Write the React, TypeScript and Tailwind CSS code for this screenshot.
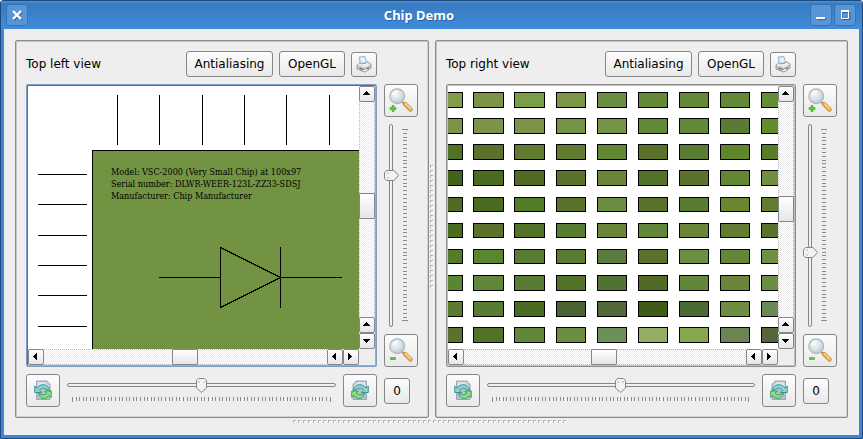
import { useState } from "react";
import type { ReactNode } from "react";

const buttonStyle =
  "flex shrink-0 items-center justify-center rounded-[3px] border border-[#868686] bg-linear-to-b from-[#fcfcfc] to-[#e9e9e9]";

function TitleButton({ label, children }: { label: string; children: ReactNode }) {
  return (
    <button
      type="button"
      aria-label={label}
      className="flex size-[22px] items-center justify-center rounded-[3px] border border-[#3473b5] bg-[#5795d7]"
    >
      <svg width="12" height="12" viewBox="0 0 12 12" aria-hidden="true">
        {children}
      </svg>
    </button>
  );
}

function PrinterIcon() {
  return (
    <svg width="16" height="17" viewBox="0 0 16 17" aria-hidden="true">
      <path d="M3 1l6-.5 1.500 6.500-6 1z" fill="#cfe6fb" stroke="#86a9cf" strokeWidth=".8" />
      <path d="M5 3l4-.4M5.500 5l4-.4" stroke="#fff" />
      <path d="M1 9l3-2.500 1 1.500 5-.8 1-1.700 4 2.500v4l-6 4-8-3z" fill="#c6c6c6" stroke="#8b8b8b" strokeWidth=".8" />
      <path d="M1.500 9l7.500 2.500 5.500-3.200-3.500-2-1 1.500-5 .7-1-1.500z" fill="#eee" />
      <path d="M3.500 12l5 2 4.500-2.600" fill="none" stroke="#666" strokeWidth="1.100" />
      <path d="M4 14l5 2 4-2.500-3-1-2 1.200z" fill="#f6f6f6" stroke="#8d8d8d" strokeWidth=".7" />
    </svg>
  );
}

function MagnifierIcon({ sign }: { sign: "plus" | "minus" }) {
  return (
    <svg width="24" height="25" viewBox="0 0 24 25" aria-hidden="true">
      <defs>
        <radialGradient id={`lens-${sign}`} cx=".4" cy=".35" r=".7">
          <stop offset="0" stopColor="#f4f9fb" />
          <stop offset=".6" stopColor="#d3dfe5" />
          <stop offset="1" stopColor="#b3c0c7" />
        </radialGradient>
      </defs>
      <path d="M12.500 13.500l3 2.500" stroke="#9b9b9b" strokeWidth="2" />
      <path d="M16 16l5.500 5.500" stroke="#b5803c" strokeWidth="4.200" strokeLinecap="round" />
      <path d="M16 16l5.500 5.500" stroke="#f0b04a" strokeWidth="3" strokeLinecap="round" />
      <path d="M16.300 15.300l5.200 5.200" stroke="#fde0a0" strokeWidth="1.200" strokeLinecap="round" />
      <circle cx="8.200" cy="8.200" r="7.400" fill={`url(#lens-${sign})`} stroke="#b0b7ba" strokeWidth="1.200" />
      <path d="M4 7a5 5 0 0 1 5-3.500" fill="none" stroke="#fff" strokeWidth="1.600" />
      {sign === "plus" ? (
        <path d="M3 17.500h2v2h2v2h-2v2h-2v-2h-2v-2h2z" fill="#56cf35" stroke="#3c9f2b" strokeWidth=".6" />
      ) : (
        <path d="M1.500 19.500h5v2h-5z" fill="#56cf35" stroke="#3c9f2b" strokeWidth=".6" />
      )}
    </svg>
  );
}

function RotateIcon({ mirrored }: { mirrored?: boolean }) {
  return (
    <svg width="18" height="21" viewBox="0 0 18 21" aria-hidden="true">
      <g transform={mirrored ? "translate(18 0) scale(-1 1)" : undefined}>
        <path d="M2.500 1h10.500l3 3v15.500H2.500z" fill="#b3becf" stroke="#8d9ab0" strokeWidth=".8" />
        <path d="M3.500 2h9l2.500 2.500V9H3.500z" fill="#dbe4ef" />
        <path d="M13 1v3h3z" fill="#f3f6fa" stroke="#8d9ab0" strokeWidth=".6" />
        <path d="M.7 6v6.500h7l-2.300-2.200c2-3 6.300-2.800 10.600 1.200C15.500 4.500 7.500 2.200 3 8z" fill="#83dcc6" stroke="#35889a" strokeWidth=".9" />
        <path d="M17.300 17.500V11h-6.500l2 2.200c-2 2.300-5 2-8.300-.2C6 19 11.500 20.500 15 15.500z" fill="#8be27c" stroke="#359a5c" strokeWidth=".9" />
      </g>
    </svg>
  );
}

type Direction = "up" | "down" | "left" | "right";

const arrows: Record<Direction, string> = {
  up: "M1 6h7v-1h-1v-1h-1v-1h-1v-1h-1v1h-1v1h-1v1h-1z",
  down: "M1 3h7v1h-1v1h-1v1h-1v1h-1v-1h-1v-1h-1v-1h-1z",
  left: "M6 1v7h-1v-1h-1v-1h-1v-1h-1v-1h1v-1h1v-1h1v-1z",
  right: "M2 1v7h1v-1h1v-1h1v-1h1v-1h-1v-1h-1v-1h-1v-1z",
};

function ScrollButton({ direction }: { direction: Direction }) {
  return (
    <button
      type="button"
      aria-label={`Scroll ${direction}`}
      className="flex size-4 shrink-0 items-center justify-center rounded-[2px] border border-[#868686] bg-linear-to-b from-white to-[#e6e6e6]"
    >
      <svg width="10" height="10" viewBox="0 0 10 10" shapeRendering="crispEdges" aria-hidden="true">
        <path d={arrows[direction]} fill="#000" />
      </svg>
    </button>
  );
}

const trackStyle =
  "relative flex-1 border-dotted border-[#b8b8b8] bg-[conic-gradient(#ebebeb_25%,#fff_0_50%,#ebebeb_0_75%,#fff_0)] bg-[length:2px_2px]";
const thumbStyle = "absolute rounded-[1px] border border-[#868686] bg-linear-to-b from-white to-[#e6e6e6]";

function ScrollBar({ vertical, position }: { vertical?: boolean; position: number }) {
  const place = `calc((100% - 26px) * ${position})`;
  return (
    <div className={vertical ? "flex w-4 flex-col" : "flex h-4"}>
      <ScrollButton direction={vertical ? "up" : "left"} />
      <div className={`${trackStyle} ${vertical ? "border-x" : "border-y"}`}>
        {vertical ? (
          <div className={`${thumbStyle} -inset-x-px h-[26px]`} style={{ top: place }} />
        ) : (
          <div className={`${thumbStyle} -inset-y-px w-[26px]`} style={{ left: place }} />
        )}
      </div>
      <ScrollButton direction={vertical ? "up" : "left"} />
      <ScrollButton direction={vertical ? "down" : "right"} />
    </div>
  );
}

function Ticks({ count, vertical }: { count: number; vertical?: boolean }) {
  return (
    <div
      aria-hidden="true"
      className={vertical ? "ml-[3px] flex w-[6px] flex-col justify-between py-[5px]" : "mt-1 flex h-[5px] justify-between px-[5px]"}
    >
      {Array.from({ length: count }, (_, i) => {
        const end = i === 0 || i === count - 1;
        if (vertical) {
          return <span key={i} className={`h-px bg-[#8c8c8c] ${end ? "w-[6px]" : "ml-px w-1"}`} />;
        }
        return <span key={i} className={`w-px bg-[#8c8c8c] ${end ? "h-[5px]" : "h-1"}`} />;
      })}
    </div>
  );
}

const grooveStyle = "absolute rounded-[2px] border border-[#868686] bg-[#f1f1f1]";

function ZoomSlider({ label, initial }: { label: string; initial: number }) {
  const [value, setValue] = useState(initial);
  return (
    <div className="relative flex flex-1">
      <div className="relative w-[15px]">
        <div className={`${grooveStyle} inset-y-0 left-[5px] w-1`} />
        <svg
          width="15"
          height="11"
          viewBox="0 0 15 11"
          aria-hidden="true"
          className="absolute left-0"
          style={{ top: `calc((100% - 11px) * ${1 - value / 500})` }}
        >
          <path d="M2.500.5h7.500l4.500 5-4.500 5H2.500l-2-2v-6z" fill="#f3f3f3" stroke="#868686" />
          <path d="M3 3h2M3 8h2" stroke="#b0b0b0" />
        </svg>
      </div>
      <Ticks count={51} vertical />
      <input
        type="range"
        aria-label={label}
        min={0}
        max={500}
        value={value}
        onChange={(e) => setValue(Number(e.target.value))}
        className="absolute inset-0 m-0 h-full w-full opacity-0 [direction:rtl] [writing-mode:vertical-lr]"
      />
    </div>
  );
}

function RotateSlider({ label }: { label: string }) {
  const [value, setValue] = useState(0);
  return (
    <div className="relative flex-1 pt-1">
      <div className="relative h-[15px]">
        <div className={`${grooveStyle} inset-x-0 top-[5px] h-1`} />
        <svg
          width="11"
          height="15"
          viewBox="0 0 11 15"
          aria-hidden="true"
          className="absolute top-0"
          style={{ left: `calc((100% - 11px) * ${(value + 360) / 720})` }}
        >
          <path d="M.5 2.500l2-2h6l2 2V10l-5 4.500-5-4.500z" fill="#f3f3f3" stroke="#868686" />
          <path d="M3 3v2M8 3v2" stroke="#b0b0b0" />
        </svg>
      </div>
      <Ticks count={73} />
      <input
        type="range"
        aria-label={label}
        min={-360}
        max={360}
        value={value}
        onChange={(e) => setValue(Number(e.target.value))}
        className="absolute inset-0 m-0 h-full w-full opacity-0"
      />
    </div>
  );
}

function SplitterDots({ count, vertical }: { count: number; vertical?: boolean }) {
  return (
    <div
      role="separator"
      aria-orientation={vertical ? "vertical" : "horizontal"}
      className={`flex shrink-0 items-center justify-center gap-[2px] ${vertical ? "w-[6px] flex-col pb-[5px]" : "h-[6px] pr-[5px]"}`}
    >
      {Array.from({ length: count }, (_, i) => (
        <span key={i} className="size-[3px] border-t border-l border-[#b4b4b4] bg-[#fbfbfb]" />
      ))}
    </div>
  );
}

function ChipCloseUp() {
  return (
    <svg className="h-full w-full bg-white" role="img" aria-label="Chip close-up">
      <g stroke="#000" shapeRendering="crispEdges" fill="none">
        {[89, 131, 174, 216, 258, 301].map((x) => (
          <path key={x} d={`M${x + 0.5} 9v50`} />
        ))}
        {[88, 118, 149, 179, 209, 240].map((y) => (
          <path key={y} d={`M10 ${y + 0.5}h49`} />
        ))}
        <rect x="64.500" y="64.500" width="600" height="600" fill="#729442" />
        <path d="M131 191.500h61M252 191.500h62M192.500 161v61M252.500 161v61M192.500 161.500l60 30-60 30" />
      </g>
      <g className="text-[9px]" fontFamily="'DejaVu Serif Condensed', 'DejaVu Serif', serif" fill="#000">
        <text x="83" y="89">Model: VSC-2000 (Very Small Chip) at 100x97</text>
        <text x="83" y="101">Serial number: DLWR-WEER-123L-ZZ33-SDSJ</text>
        <text x="83" y="113">Manufacturer: Chip Manufacturer</text>
      </g>
    </svg>
  );
}

const columns = [-16, 25, 66, 108, 149, 190, 231, 272, 313];
const rows = [6, 32, 58, 84, 111, 137, 163, 189, 215, 241];
const chipColors = [
  "#839e4a #7b9449 #7a9e48 #7b9649 #6b8e43 #628838 #628838 #628838 #628e36",
  "#7b9449 #7b9449 #7b9449 #729444 #729444 #62883a #62883a #5a7c32 #628c2f",
  "#527228 #5a722c #627c32 #627c32 #628632 #5a722c #5a7c32 #62862b #5a7c2a",
  "#426318 #4a6b20 #526a26 #5a722c #6b863a #52722a #5a722c #628632 #728e43",
  "#526a26 #4a6b20 #527c28 #5a722c #6b8e43 #5a722c #5a7c32 #6b8632 #627c32",
  "#4a6b20 #5a722c #527228 #5a7c32 #6b863a #62863a #6b863a #627c32 #5a722c",
  "#527c28 #5a8630 #5a7c32 #5a7c32 #5a7c40 #5a722c #6b8e43 #62863a #728e43",
  "#5a8630 #62863a #5a7c32 #527228 #527234 #526a26 #62863a #6b863a #6b8e43",
  "#5a7c32 #5a7c32 #4a6b20 #4a6334 #52673a #3e5b18 #4a6b34 #6b8e43 #6b8858",
  "#5a722c #527228 #62863a #6b8e43 #6b9058 #93ad65 #87a74e #6b8654 #556638",
].map((line) => line.split(" "));

function ChipField() {
  return (
    <svg className="h-full w-full bg-white" role="img" aria-label="Field of chips">
      <g stroke="#000" shapeRendering="crispEdges">
        {rows.map((y, r) =>
          columns.map((x, c) => (
            <rect
              key={`${r}-${c}`}
              x={x + 0.5}
              y={y + 0.5}
              width={c < 3 ? 30 : 29}
              height={r > 3 && r < 7 ? 14 : 15}
              fill={chipColors[r][c]}
            />
          )),
        )}
      </g>
    </svg>
  );
}

interface ViewProps {
  title: string;
  focused?: boolean;
  zoom: number;
  scroll: [number, number];
  className: string;
  children: ReactNode;
}

function ViewPanel({ title, focused, zoom, scroll, className, children }: ViewProps) {
  return (
    <section
      aria-label={title}
      className={`grid min-w-0 basis-0 grid-cols-[minmax(0,1fr)_34px] grid-rows-[26px_minmax(0,1fr)_33px] gap-[7px] rounded-[2px] border border-[#8c8c8c] p-[10px] shadow-[inset_1px_1px_0_#c6c6c6,inset_-1px_-1px_0_#d2d2d2] ${className}`}
    >
      <header className="flex items-center gap-[6px]">
        <h2 className="flex-1">{title}</h2>
        <button type="button" className={`${buttonStyle} h-[26px] w-[87px]`}>
          Antialiasing
        </button>
        <button type="button" className={`${buttonStyle} h-[26px] w-[66px]`}>
          OpenGL
        </button>
        <button type="button" aria-label="Print" className={`${buttonStyle} h-[25px] w-[26px]`}>
          <PrinterIcon />
        </button>
      </header>

      <div
        className={`col-start-1 row-start-2 rounded-[2px] border ${focused ? "border-[#7b9fc6]" : "border-[#8c8c8c]"}`}
      >
        <div
          className={`grid h-full grid-cols-[minmax(0,1fr)_16px] grid-rows-[minmax(0,1fr)_16px] overflow-hidden border ${
            focused ? "border-t-[#4f7399] border-r-[#8fb0d3] border-b-[#8fb0d3] border-l-[#4f7399]" : "border-[#c0c0c0]"
          }`}
        >
          <div className="overflow-hidden">{children}</div>
          <ScrollBar vertical position={scroll[1]} />
          <ScrollBar position={scroll[0]} />
        </div>
      </div>

      <div className="col-start-2 row-start-2 flex flex-col gap-[7px]">
        <button type="button" aria-label="Zoom in" className={`${buttonStyle} h-[33px]`}>
          <MagnifierIcon sign="plus" />
        </button>
        <ZoomSlider label={`${title} zoom`} initial={zoom} />
        <button type="button" aria-label="Zoom out" className={`${buttonStyle} h-[33px]`}>
          <MagnifierIcon sign="minus" />
        </button>
      </div>

      <div className="col-start-1 row-start-3 flex gap-[7px]">
        <button type="button" aria-label="Rotate left" className={`${buttonStyle} w-[34px]`}>
          <RotateIcon />
        </button>
        <RotateSlider label={`${title} rotation`} />
        <button type="button" aria-label="Rotate right" className={`${buttonStyle} w-[34px]`}>
          <RotateIcon mirrored />
        </button>
      </div>

      <button type="button" className={`${buttonStyle} col-start-2 row-start-3 size-[26px] self-center`}>
        0
      </button>
    </section>
  );
}

export default function App() {
  return (
    <div className="flex h-screen flex-col rounded-t-[3px] border border-[#1d4a7c] bg-[#3b87d6] font-['DejaVu_Sans',sans-serif] text-[12px] leading-4 text-black">
      <header className="flex h-7 shrink-0 items-center gap-[2px] bg-linear-to-b from-[#4a92dc] via-[#387bc0] via-10% to-[#3f8cdb] pr-[6px] pl-[5px]">
        <TitleButton label="Close">
          <path d="M3 3l8 8M11 3l-8 8" stroke="#2c649f" strokeWidth="2" />
          <path d="M2 2l8 8M10 2l-8 8" stroke="#fff" strokeWidth="2.400" />
        </TitleButton>
        <h1 className="flex-1 text-center font-['Noto_Sans','DejaVu_Sans',sans-serif] text-[13px] font-bold text-white [text-shadow:1px_1px_0_#2c649f]">
          Chip Demo
        </h1>
        <TitleButton label="Minimize">
          <path d="M2 10h9" stroke="#2c649f" strokeWidth="2" />
          <path d="M1 9h9" stroke="#fff" strokeWidth="2" />
        </TitleButton>
        <TitleButton label="Maximize">
          <path d="M3 3.500h8v7H3z" fill="none" stroke="#2c649f" />
          <path d="M2.500 2.500h7v7h-7z" fill="none" stroke="#fff" />
          <path d="M2 2h8" stroke="#fff" strokeWidth="2" />
        </TitleButton>
      </header>

      <main className="mx-[3px] mb-[3px] flex min-h-0 flex-1 flex-col bg-[#eeeeee] p-[11px]">
        <div className="flex min-h-0 flex-1">
          <ViewPanel title="Top left view" focused zoom={380} scroll={[0.498, 0.481]} className="grow-414">
            <ChipCloseUp />
          </ViewPanel>
          <SplitterDots count={25} vertical />
          <ViewPanel title="Top right view" zoom={180} scroll={[0.497, 0.497]} className="grow-413">
            <ChipField />
          </ViewPanel>
        </div>
        <SplitterDots count={55} />
      </main>
    </div>
  );
}
